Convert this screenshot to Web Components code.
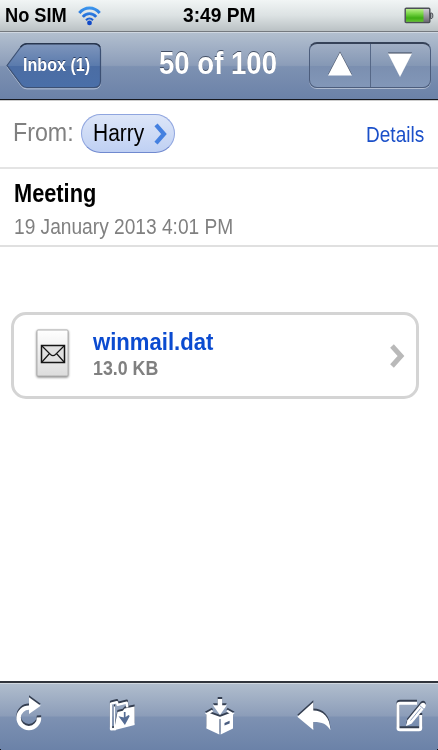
<!DOCTYPE html>
<html lang="en">
<head>
<meta charset="utf-8">
<meta name="viewport" content="width=device-width, initial-scale=1">
<title>Mail</title>
<style>
    html, body {
        margin: 0;
        height: 100%;
        overflow: hidden;
    }

    body {
        font-family: "Liberation Sans", Arial, sans-serif;
        background: #fff;
    }
</style>
</head>
<body>
<mail-screen></mail-screen>
<script>
function render(host, html) {
    const template = document.createElement("template");
    template.innerHTML = html;
    host.attachShadow({ mode: "open" }).append(template.content.cloneNode(true));
}

// One line of text, condensed horizontally to the width attribute
class FitText extends HTMLElement {
    constructor() {
        super();
        render(this, `
            <style>
                :host {
                    display: block;
                    flex: none;
                    white-space: nowrap;
                }

                span {
                    display: inline-block;
                    transform-origin: 0 50%;
                }
            </style>
            <span><slot></slot></span>
        `);
    }

    connectedCallback() {
        const width = Number(this.getAttribute("width"));
        const size = this.getAttribute("size");
        const span = this.shadowRoot.querySelector("span");
        this.style.width = `${width}px`;
        this.style.fontSize = `${size}px`;
        this.style.lineHeight = this.getAttribute("line") + "px";
        this.style.height = this.getAttribute("line") + "px";
        span.style.transform = `scaleX(${width / span.offsetWidth})`;
    }
}

class StatusBar extends HTMLElement {
    constructor() {
        super();
        render(this, `
            <style>
                :host {
                    display: grid;
                    grid-template-columns: 1fr auto 1fr;
                    align-items: center;
                    box-sizing: border-box;
                    height: 32px;
                    padding: 0 4px 1px 5px;
                    border-bottom: 1px solid #74797f;
                    background: linear-gradient(#f1f5f5, #dce2e3 50%, #bac1c4);
                    color: #000;
                    font-weight: bold;
                }

                .left {
                    display: flex;
                    align-items: center;
                    gap: 11px;
                }

                svg { display: block; }
                .battery { justify-self: end; }
            </style>
            <div class="left">
                <fit-text width="62" size="20" line="31">No SIM</fit-text>
                <svg width="23" height="20" viewBox="0 0 23 20">
                    <defs>
                        <linearGradient id="w" x1="0" y1="0" x2="0" y2="20" gradientUnits="userSpaceOnUse">
                            <stop offset="0" stop-color="#3f9cf0"/>
                            <stop offset="1" stop-color="#0b43c4"/>
                        </linearGradient>
                    </defs>
                    <g fill="none" stroke="url(#w)" stroke-width="3">
                        <path d="M1.300 7C7 .3 16 .3 21.700 7"/>
                        <path d="M4.800 10.900c3.700-4.300 9.700-4.300 13.400 0" stroke-width="2.800"/>
                        <path d="M8 14.200c2-2 5-2 7 0" stroke-width="2.200"/>
                    </g>
                    <circle cx="11.500" cy="16.900" r="2.400" fill="#1049c8"/>
                </svg>
            </div>
            <fit-text width="73" size="20" line="31">3:49 PM</fit-text>
            <svg class="battery" width="30" height="17" viewBox="0 0 30 17">
                <defs>
                    <linearGradient id="g" x2="0" y2="1">
                        <stop offset="0" stop-color="#b9ef8a"/>
                        <stop offset=".35" stop-color="#7bd648"/>
                        <stop offset=".7" stop-color="#3fae14"/>
                        <stop offset="1" stop-color="#63c22f"/>
                    </linearGradient>
                    <linearGradient id="e" x2="0" y2="1">
                        <stop offset="0" stop-color="#d5d3da"/>
                        <stop offset="1" stop-color="#67636e"/>
                    </linearGradient>
                </defs>
                <rect x="1.200" y="1.200" width="24.600" height="14.400" rx="1" fill="url(#e)" stroke="#4b4f55" stroke-width="1.400"/>
                <rect x="2" y="2" width="17.500" height="12.800" fill="url(#g)"/>
                <path d="M26.500 6h1.300c1.400 0 1.400 5.500 0 5.500h-1.300z" fill="#a5a8ae" stroke="#4b4f55"/>
            </svg>
        `);
    }
}

class BackButton extends HTMLElement {
    constructor() {
        super();
        render(this, `
            <style>
                :host {
                    display: grid;
                    width: 96px;
                    height: 48px;
                }

                svg, .label { grid-area: 1 / 1; }

                .label {
                    padding: 10px 0 0 17px;
                    color: #fff;
                    font-weight: bold;
                    text-shadow: 0 -1px 0 rgba(20, 35, 70, .75);
                }
            </style>
            <svg width="96" height="48" viewBox="0 0 96 48">
                <defs>
                    <linearGradient id="b" x2="0" y2="1">
                        <stop offset="0" stop-color="#7f96bc"/>
                        <stop offset=".5" stop-color="#5b7bad"/>
                        <stop offset=".52" stop-color="#4b6da4"/>
                        <stop offset="1" stop-color="#4a6fa8"/>
                    </linearGradient>
                </defs>
                <path transform="translate(0 1.400)" d="M1 23.500 15.500 4Q17.500 1.500 21 1.500H88Q94.500 1.500 94.500 8V39Q94.500 45.500 88 45.500H21Q17.500 45.500 15.500 43Z" fill="none" stroke="#b3c0d5"/>
                <path d="M1 23.500 15.500 4Q17.500 1.500 21 1.500H88Q94.500 1.500 94.500 8V39Q94.500 45.500 88 45.500H21Q17.500 45.500 15.500 43Z" fill="url(#b)" stroke="#3c5073" stroke-width="1.200"/>
                <path d="M14.500 5Q17.500 1.700 21 1.700H88Q92.500 1.700 94 5" fill="none" stroke="#29374f" stroke-width="1.400"/>
            </svg>
            <div class="label"><slot></slot></div>
        `);
    }
}

class ArrowSegments extends HTMLElement {
    constructor() {
        super();
        render(this, `
            <style>
                :host {
                    display: flex;
                    box-sizing: border-box;
                    width: 122px;
                    height: 46px;
                    border: 1px solid #4c5d7c;
                    border-top: 2px solid #364258;
                    border-radius: 8px;
                    background: linear-gradient(#a0aec4, #8598b5 50%, #7b8fb0 52%, #8297b8);
                    box-shadow: 0 1px 0 rgba(255, 255, 255, .45);
                }

                div {
                    flex: 1;
                    display: grid;
                    place-items: center;
                    padding-bottom: 3px;
                }

                div + div { border-left: 1px solid #566887; }
                svg { filter: drop-shadow(0 -1px 0 #384357); }
            </style>
            <div><svg width="24" height="26" viewBox="0 0 24 26"><path d="M12 1.500 24 24.500H0z" fill="#fff"/></svg></div>
            <div><svg width="24" height="26" viewBox="0 0 24 26"><path d="M0 2.500h24L12 26z" fill="#fff"/></svg></div>
        `);
    }
}

class NavBar extends HTMLElement {
    constructor() {
        super();
        render(this, `
            <style>
                :host {
                    display: flex;
                    justify-content: space-between;
                    box-sizing: border-box;
                    height: 68px;
                    padding: 9px 7px 0 6px;
                    border-top: 1px solid #cfd7e1;
                    border-bottom: 1px solid #16191f;
                    background: linear-gradient(#b2bfcf, #8c9db9 49%, #7d91b2 51%, #6b82a8);
                }

                .title {
                    padding: 5px 0 0 24px;
                    color: #fff;
                    font-weight: bold;
                    text-shadow: 0 -1.500px 0 rgba(45, 55, 75, .8);
                }
            </style>
            <back-button><fit-text width="67" size="18.500" line="26">Inbox (1)</fit-text></back-button>
            <div class="title"><fit-text width="118" size="32" line="33">50 of 100</fit-text></div>
            <arrow-segments></arrow-segments>
        `);
    }
}

class ContactPill extends HTMLElement {
    constructor() {
        super();
        render(this, `
            <style>
                :host {
                    display: flex;
                    align-items: center;
                    gap: 10px;
                    box-sizing: border-box;
                    width: 94px;
                    height: 39px;
                    padding-left: 11px;
                    border: 1px solid #8fa5df;
                    border-bottom-color: #7089cf;
                    border-radius: 20px;
                    background: linear-gradient(#dde6f8, #bfd0f3);
                    color: #000;
                }

                svg { display: block; }
            </style>
            <slot></slot>
            <svg width="14" height="22" viewBox="0 0 14 22">
                <path d="M2 1.800 10 11 2 20.200" fill="none" stroke="#4480e0" stroke-width="4.200"/>
            </svg>
        `);
    }
}

class MessageHeader extends HTMLElement {
    constructor() {
        super();
        render(this, `
            <style>
                :host { display: block; }

                .from {
                    display: flex;
                    box-sizing: border-box;
                    height: 69px;
                    padding: 13px 14px 0 13px;
                    border-top: 1px solid #cdcdcd;
                    border-bottom: 2px solid #e4e4e4;
                    color: #808080;
                }

                .from contact-pill { margin: 0 0 0 7px; }

                .details {
                    margin: 3px 0 0 auto;
                    color: #1b50c9;
                }

                .subject {
                    box-sizing: border-box;
                    height: 78px;
                    padding: 9px 14px 0;
                    border-bottom: 2px solid #e0e0e0;
                    color: #808080;
                }

                .title {
                    color: #000;
                    font-weight: bold;
                    margin-bottom: 4px;
                }
            </style>
            <div class="from">
                <fit-text width="61" size="25.500" line="37">From:</fit-text>
                <contact-pill><fit-text width="51" size="23" line="37">Harry</fit-text></contact-pill>
                <fit-text class="details" width="58" size="22" line="36">Details</fit-text>
            </div>
            <div class="subject">
                <fit-text class="title" width="82" size="25.500" line="30">Meeting</fit-text>
                <fit-text width="219" size="21.500" line="30">19 January 2013 4:01 PM</fit-text>
            </div>
        `);
    }
}

class AttachmentCard extends HTMLElement {
    constructor() {
        super();
        render(this, `
            <style>
                :host {
                    display: flex;
                    align-items: center;
                    box-sizing: border-box;
                    height: 87px;
                    margin: 65px 19px 0 11px;
                    padding: 0 11px 0 20px;
                    border: 3px solid #d4d4d4;
                    border-radius: 15px;
                }

                svg { display: block; flex: none; }

                .info {
                    flex: 1;
                    padding: 0 0 2px 21px;
                }

                .name { color: #0b4bd0; font-weight: bold; }
                .size { color: #808080; font-weight: bold; }
            </style>
            <svg width="38" height="58" viewBox="0 0 38 58">
                <defs>
                    <linearGradient id="p" x2="0" y2="1">
                        <stop offset="0" stop-color="#fff"/>
                        <stop offset="1" stop-color="#dcdcdc"/>
                    </linearGradient>
                </defs>
                <rect x="3" y="3" width="31" height="46" rx="1" fill="url(#p)" stroke="#b0b0b0" style="filter: drop-shadow(0 1.500px 1.200px rgba(0,0,0,.5))"/>
                <rect x="7.500" y="18.500" width="23" height="17" fill="#e0e0e0" stroke="#151515" stroke-width="1.500"/>
                <path d="M7.500 18.500 16.500 27.500Q19 29.800 21.500 27.500L30.500 18.500M7.500 35.500l8-9M30.500 35.500l-8-9" fill="none" stroke="#151515" stroke-width="1.200"/>
            </svg>
            <div class="info">
                <fit-text class="name" width="120" size="24.500" line="28">winmail.dat</fit-text>
                <fit-text class="size" width="65" size="20" line="25">13.0 KB</fit-text>
            </div>
            <svg width="15" height="26" viewBox="0 0 15 26">
                <path d="M2 3 11 13 2 23" fill="none" stroke="#b9b9b9" stroke-width="5"/>
            </svg>
        `);
    }
}

const ICONS = {
    refresh: `
        <path d="M27 22.300A10.200 10.200 0 1 1 17.500 12.700" fill="none" stroke="#fff" stroke-width="4.400"/>
        <path d="M17 2.200 28.700 10.800 17 19z" fill="#fff"/>`,
    move: `
        <path d="M9 34 4 34.300V8.700L10 7.200 10.600 9.800 19.800 7.700 20.300 12.500" fill="none" stroke="#fff" stroke-width="2.300" stroke-linejoin="round"/>
        <path d="M7.500 11.500V33" fill="none" stroke="#fff" stroke-width="1.200"/>
        <path d="M7 35.300 10.500 17 15.800 15.800 17.600 13.400 27.600 11.400V30z" fill="#fff"/>
        <path d="M17.700 17v8M13.500 22.500l4.300 6 4.200-7.800-4 2.800z" fill="#566d95" stroke="#566d95" stroke-width="1.700"/>`,
    archive: `
        <path d="M15.700 4h4.500v6.300h4.600L18 20 10.900 10.300h4.800z" fill="#fff"/>
        <path d="M17.300 23.200V39.500L4.400 33.600V18.500zM18.700 23.200 31 18.500V33.600L18.700 39.500z" fill="#fff"/>
        <path d="M10.500 15.800 5.500 18.500 18 23 30 18.500 25 15.800" fill="none" stroke="#fff" stroke-width="2.200"/>
        <path d="M22.500 28 27.600 25.800v2.600l-5.100 2.200z" fill="#4a5d80"/>`,
    reply: `
        <path d="M.3 21.700 16.300 7.300V15.500C26 15.500 33 22 33.400 35.300 30 29 25 26.900 16.300 27V35z" fill="#fff"/>`,
    compose: `
        <path d="M25 8.300H8Q6 8.300 6 10V33Q6 34.700 8 34.700H27Q28.700 34.700 28.700 33V20" fill="none" stroke="#fff" stroke-width="3"/>
        <path d="M14 31 15.400 25.300 28.900 8.800Q31 6.900 32.900 8.400 34.700 10 33.200 12.200L19.500 28.700z" fill="#fff"/>
        <path d="M18.500 25.500 28.500 13.500M28 10.800l3.800 3.200" stroke="#6079a1" stroke-width=".7"/>`
};

class ToolIcon extends HTMLElement {
    constructor() {
        super();
        render(this, `
            <style>
                :host {
                    display: block;
                    width: 36px;
                    height: 40px;
                }

                svg {
                    display: block;
                    filter: drop-shadow(0 -1.200px 0 #343e50);
                }
            </style>
            <svg width="36" height="40" viewBox="0 0 36 40"></svg>
        `);
    }

    connectedCallback() {
        this.shadowRoot.querySelector("svg").innerHTML = ICONS[this.getAttribute("name")];
    }
}

class ToolBar extends HTMLElement {
    constructor() {
        super();
        render(this, `
            <style>
                :host {
                    display: flex;
                    justify-content: space-between;
                    box-sizing: border-box;
                    height: 69px;
                    padding: 12px 10px 0 12px;
                    border-top: 2px solid #30343b;
                    background:
                        radial-gradient(circle at 100% 0, transparent 3px, #000 3.600px) 0 100% / 3px 3px no-repeat,
                        radial-gradient(circle at 0 0, transparent 3px, #000 3.600px) 100% 100% / 3px 3px no-repeat,
                        linear-gradient(#d0d7df 0 1px, #b0bdcd 1px, #8c9db9 49%, #7d91b2 51%, #6b82a8);
                }
            </style>
            <tool-icon name="refresh"></tool-icon>
            <tool-icon name="move"></tool-icon>
            <tool-icon name="archive"></tool-icon>
            <tool-icon name="reply"></tool-icon>
            <tool-icon name="compose"></tool-icon>
        `);
    }
}

class MailScreen extends HTMLElement {
    constructor() {
        super();
        render(this, `
            <style>
                :host {
                    display: flex;
                    flex-direction: column;
                    width: 438px;
                    height: 750px;
                    background: #fff;
                }

                main { flex: 1; }
            </style>
            <status-bar></status-bar>
            <nav-bar></nav-bar>
            <main>
                <message-header></message-header>
                <attachment-card></attachment-card>
            </main>
            <tool-bar></tool-bar>
        `);
    }
}

customElements.define("fit-text", FitText);
customElements.define("status-bar", StatusBar);
customElements.define("back-button", BackButton);
customElements.define("arrow-segments", ArrowSegments);
customElements.define("nav-bar", NavBar);
customElements.define("contact-pill", ContactPill);
customElements.define("message-header", MessageHeader);
customElements.define("attachment-card", AttachmentCard);
customElements.define("tool-icon", ToolIcon);
customElements.define("tool-bar", ToolBar);
customElements.define("mail-screen", MailScreen);
</script>
</body>
</html>
